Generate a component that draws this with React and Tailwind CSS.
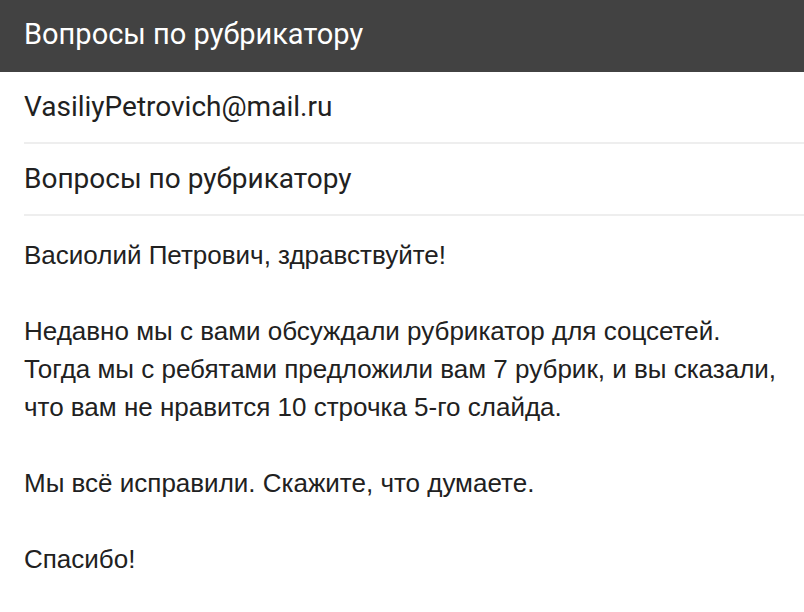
export default function App() {
  return (
    <div className="w-[804px] h-[612px] bg-white overflow-hidden">
      <div className="h-[72px] bg-[#424242] flex items-center px-6 pb-1">
        <div className="text-white text-[29px] font-normal leading-none" style={{ fontFamily: "Roboto, sans-serif" }}>
          Вопросы по рубрикатору
        </div>
      </div>
      <div className="pl-6" style={{ fontFamily: "Roboto, sans-serif" }}>
        <div className="h-[72px] flex items-center border-b-2 border-[#eeeeee] text-[28px] text-[#212121]">
          VasiliyPetrovich@mail.ru
        </div>
        <div className="h-[72px] flex items-center border-b-2 border-[#eeeeee] text-[28px] text-[#212121]">
          Вопросы по рубрикатору
        </div>
      </div>
      <div
        className="px-6 pt-5 text-[26px] leading-[38px] text-[#212121]"
        style={{ fontFamily: "'Liberation Sans', Arial, sans-serif" }}
      >
        <p>Васиолий Петрович, здравствуйте!</p>
        <p className="mt-[38px]">
          Недавно мы с вами обсуждали рубрикатор для соцсетей.
          <br />
          Тогда мы с ребятами предложили вам 7 рубрик, и вы сказали,
          <br />
          что вам не нравится 10 строчка 5-го слайда.
        </p>
        <p className="mt-[38px]">Мы всё исправили. Скажите, что думаете.</p>
        <p className="mt-[38px]">Спасибо!</p>
      </div>
    </div>
  );
}
